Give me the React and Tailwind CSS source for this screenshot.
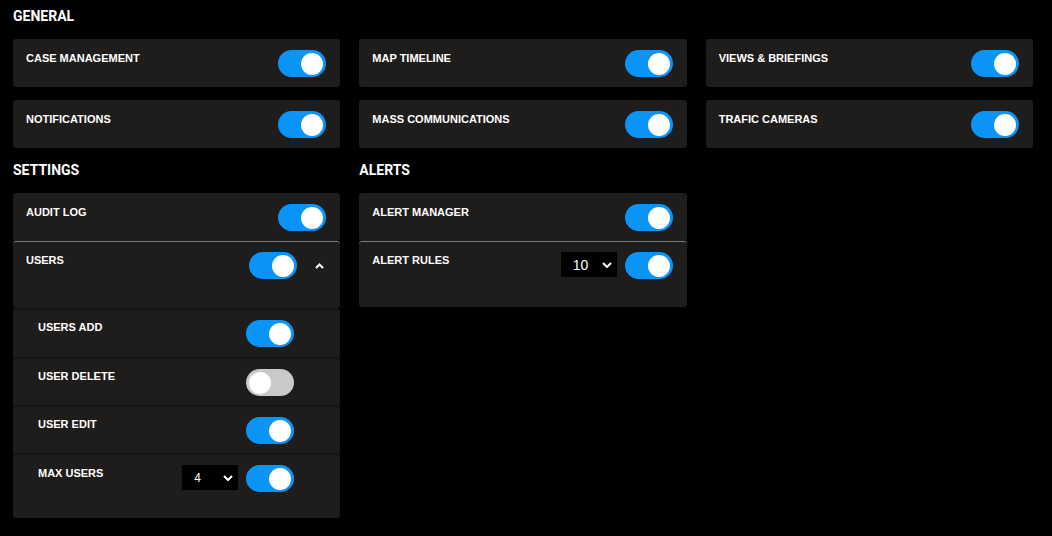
import React from "react";

const general = [
  { label: "CASE MANAGEMENT", on: true },
  { label: "MAP TIMELINE", on: true },
  { label: "VIEWS & BRIEFINGS", on: true },
  { label: "NOTIFICATIONS", on: true },
  { label: "MASS COMMUNICATIONS", on: true },
  { label: "TRAFIC CAMERAS", on: true },
];

const userItems = [
  { label: "USERS ADD", on: true, h: "h-[47px]" },
  { label: "USER DELETE", on: false, h: "h-[46px]" },
  { label: "USER EDIT", on: true, h: "h-[46px]" },
];

function Toggle({ on }) {
  return (
    <div
      className={`flex h-[27px] w-[48px] shrink-0 items-center rounded-full px-[3px] ${
        on ? "justify-end bg-[#0a94f8]" : "justify-start bg-[#c9c9c9]"
      }`}
    >
      <div className="h-[22px] w-[22px] rounded-full bg-white" />
    </div>
  );
}

function ChevronDown() {
  return (
    <svg width="10" height="6" viewBox="0 0 10 6" fill="none">
      <polyline points="1,1 5,5 9,1" stroke="white" strokeWidth="2" />
    </svg>
  );
}

function ChevronUp() {
  return (
    <svg width="9" height="6" viewBox="0 0 9 6" fill="none">
      <polyline points="1,5 4.5,1.5 8,5" stroke="white" strokeWidth="2" />
    </svg>
  );
}

function Select({ value, size }) {
  return (
    <div className="flex h-[25px] w-[56px] items-center justify-between bg-black pl-[12px] pr-[5px]">
      <span className={`${size} leading-none text-white`}>{value}</span>
      <ChevronDown />
    </div>
  );
}

function Label({ children }) {
  return (
    <span className="mt-[2px] text-[11px] leading-[13px] font-bold text-white">
      {children}
    </span>
  );
}

function Card({ label, on }) {
  return (
    <div className="flex h-[48px] items-start justify-between rounded-[3px] bg-[#1f1c1c] pt-[11px] pr-[14px] pl-[13px]">
      <Label>{label}</Label>
      <Toggle on={on} />
    </div>
  );
}

function Title({ children }) {
  return (
    <h2 className="font-['Roboto',sans-serif] text-[14px] leading-[16px] font-bold text-white">
      {children}
    </h2>
  );
}

export default function App() {
  return (
    <div className="min-h-screen w-[1052px] bg-black pt-[8px] pl-[13px] font-['Liberation_Sans',Arial,sans-serif]">
      <Title>GENERAL</Title>
      <div className="mt-[15px] grid w-[1020px] grid-cols-3 gap-x-[19px] gap-y-[13px]">
        {general.map((g) => (
          <Card key={g.label} label={g.label} on={g.on} />
        ))}
      </div>

      <div className="mt-[14px] grid w-[1020px] grid-cols-3 gap-x-[19px]">
        {/* Settings */}
        <div>
          <Title>SETTINGS</Title>
          <div className="mt-[15px] flex flex-col">
            <Card label="AUDIT LOG" on />
            <div className="flex h-[67px] items-start justify-between rounded-[3px] border-t border-[#7a7a7a] bg-[#1f1c1c] pt-[10px] pr-[15px] pl-[13px]">
              <Label>USERS</Label>
              <div className="flex items-center gap-[16px]">
                <Toggle on />
                <div className="flex w-[12px] justify-center">
                  <ChevronUp />
                </div>
              </div>
            </div>
            <div className="flex flex-col gap-[2px] rounded-[3px] bg-[#161414] pt-[2px]">
              {userItems.map((u) => (
                <div
                  key={u.label}
                  className={`flex ${u.h} items-start justify-between rounded-[3px] bg-[#1f1c1c] pt-[10px] pr-[46px] pl-[25px]`}
                >
                  <span className="mt-[1px] text-[11px] leading-[13px] font-bold text-white">
                    {u.label}
                  </span>
                  <Toggle on={u.on} />
                </div>
              ))}
              <div className="flex h-[63px] items-start justify-between rounded-[3px] bg-[#1f1c1c] pt-[10px] pr-[46px] pl-[25px]">
                <span className="mt-[2px] text-[11px] leading-[13px] font-bold text-white">
                  MAX USERS
                </span>
                <div className="flex items-start gap-[8px]">
                  <Select value="4" size="text-[12px]" />
                  <Toggle on />
                </div>
              </div>
            </div>
          </div>
        </div>

        {/* Alerts */}
        <div>
          <Title>ALERTS</Title>
          <div className="mt-[15px] flex flex-col">
            <Card label="ALERT MANAGER" on />
            <div className="flex h-[66px] items-start justify-between rounded-[3px] border-t border-[#7a7a7a] bg-[#1f1c1c] pt-[10px] pr-[14px] pl-[13px]">
              <Label>ALERT RULES</Label>
              <div className="flex items-start gap-[8px]">
                <Select value="10" size="text-[14px]" />
                <Toggle on />
              </div>
            </div>
          </div>
        </div>
      </div>
    </div>
  );
}
